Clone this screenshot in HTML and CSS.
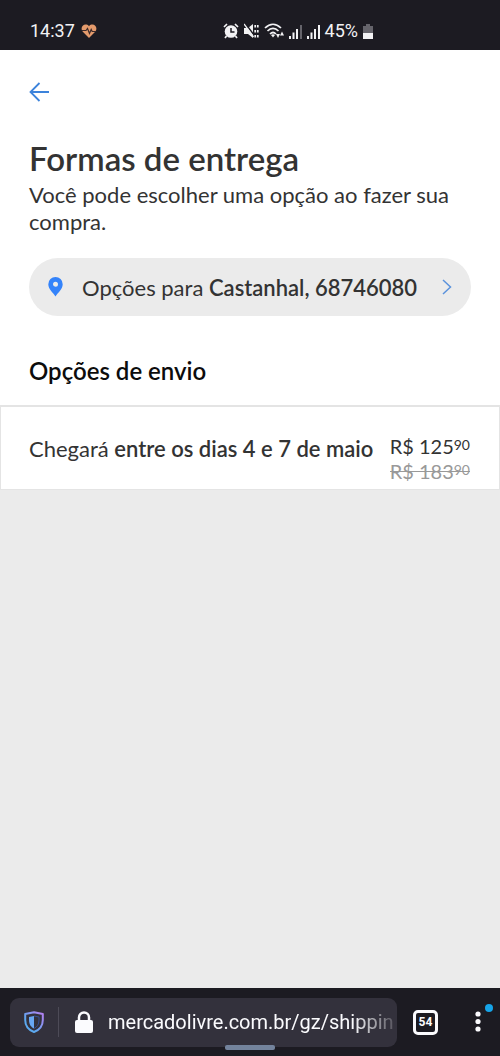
FILE: index.html
```html
<!DOCTYPE html>
<html lang="pt-BR">
<head>
<meta charset="utf-8">
<meta name="viewport" content="width=device-width, initial-scale=1">
<title>Formas de entrega</title>
<link rel="stylesheet" href="styles.css">
</head>
<body>
<header class="status">
  <span class="status-text">14:37</span>
  <svg class="heart" width="16" height="15" viewBox="0 0 16 15" aria-hidden="true"><path d="M8 14 1.800 7.800C-2 3 4-2 8 2.200 12-2 18 3 14.200 7.800Z" fill="#e39a6c"/><path d="M1 6.500h4l1.500-2 2 5 1.700-4 1 2h4" fill="none" stroke="#3b2a2a" stroke-width="1.200"/></svg>
  <div class="status-icons">
    <svg width="16" height="16" viewBox="0 0 16 16" aria-hidden="true"><circle cx="8" cy="8.500" r="6.300" fill="#f2f2f4"/><path d="M1 4 4 1M15 4l-3-3M3.500 13l-1.500 2M12.500 13l1.500 2" stroke="#f2f2f4" stroke-width="1.700"/><path d="M8 5v4h3.500" fill="none" stroke="#1c1b22" stroke-width="1.500"/></svg>
    <svg width="15" height="16" viewBox="0 0 15 16" aria-hidden="true"><path d="M0 5h4l5-4v14l-5-4H0z" fill="#f2f2f4"/><path d="m1 0 9 12" stroke="#1c1b22" stroke-width="1.500"/><path d="m0 1 9.500 13" stroke="#f2f2f4" stroke-width="1.300"/><path d="M11.200 2v2.500M11.200 7v2.500M11.200 12v2.500M13.800 2v2.500M13.800 7v2.500M13.800 12v2.500" stroke="#f2f2f4" stroke-width="1.700"/></svg>
    <svg width="20" height="16" viewBox="0 0 20 16" aria-hidden="true"><path d="M1 5c5-5 11-5 16 0M3.500 8c3.500-3.500 7.500-3.500 11 0M6 11c2-2 4-2 6 0" fill="none" stroke="#f2f2f4" stroke-width="1.700"/><path d="m7 12 2 2.500 2-2.500c-1-1-3-1-4 0" fill="#f2f2f4"/><path d="M12 11h4l-2 4zM16 12.500h4l-2-4z" fill="#f2f2f4"/></svg>
    <svg width="13" height="15" viewBox="0 0 13 15" aria-hidden="true"><path d="M1 15v-3M4.500 15V8.500M8 15V5" stroke="#f2f2f4" stroke-width="2"/><path d="M12 15V1" stroke="#65646b" stroke-width="2"/></svg>
    <svg width="13" height="15" viewBox="0 0 13 15" aria-hidden="true"><path d="M1 15v-3M4.500 15V8.500M8 15V5M12 15V1" stroke="#f2f2f4" stroke-width="2"/></svg>
    <span class="status-text">45%</span>
    <svg width="10" height="15" viewBox="0 0 10 15" aria-hidden="true"><path d="M3 0h4v2h3v7H0V2h3z" fill="#65646b"/><path d="M0 9h10v6H0z" fill="#f2f2f4"/></svg>
  </div>
</header>

<main class="page">
  <section class="intro">
    <button class="back" type="button" aria-label="Voltar"><svg width="20" height="20" viewBox="0 0 20 20" aria-hidden="true"><path d="M20 10H1.500M10.500 1 1.500 10l9 9" fill="none" stroke="#3c83db" stroke-width="1.800"/></svg></button>
    <h1>Formas de entrega</h1>
    <p class="lead">Você pode escolher uma opção ao fazer sua compra.</p>
    <button class="place" type="button">
      <svg width="15" height="20" viewBox="0 0 15 20" aria-hidden="true"><path fill-rule="evenodd" d="M7.500 0A7.200 7.200 0 0 0 .3 7.200C.3 12 5 15.500 7.500 19.500 10 15.500 14.700 12 14.700 7.200A7.200 7.200 0 0 0 7.500 0m0 4.700a2.500 2.500 0 1 1 0 5 2.500 2.500 0 0 1 0-5" fill="#3483fa"/></svg>
      <span class="place-text">Opções para <b>Castanhal, 68746080</b></span>
      <svg width="10" height="16" viewBox="0 0 10 16" aria-hidden="true"><path d="m1 1 7.500 7L1 15" fill="none" stroke="#5a92dc" stroke-width="1.500"/></svg>
    </button>
    <h2>Opções de envio</h2>
  </section>
  <section class="option">
    <p class="when">Chegará <b>entre os dias 4 e 7 de maio</b></p>
    <div class="prices">
      <span class="price">R$ 125<sup>90</sup></span>
      <s class="price old">R$ 183<sup>90</sup></s>
    </div>
  </section>
</main>

<footer class="browser">
  <div class="address">
    <svg width="20" height="22" viewBox="0 0 20 22" aria-hidden="true"><defs><linearGradient id="shield" x1="0" y1="1" x2="1" y2="0"><stop offset="0.300" stop-color="#5ba8ee"/><stop offset="1" stop-color="#b77ff2"/></linearGradient></defs><path d="M10 1.200 18.800 3v6c0 6-3.500 10-8.800 12C4.700 19 1.200 15 1.200 9V3z" fill="none" stroke="url(#shield)" stroke-width="2" stroke-linejoin="round"/><path d="M10 5v12.500C7 16 5 13.500 5 9V6z" fill="#68a7f3"/><path d="M10 5l5 1v3c0 4.500-2 7-5 8.500" fill="none" stroke="#364f91" stroke-width="1"/></svg>
    <span class="rule"></span>
    <svg width="18" height="22" viewBox="0 0 18 22" aria-hidden="true"><rect y="9" width="18" height="13" rx="2" fill="#fbfbfe"/><path d="M4 10V6.500a5 5 0 0 1 10 0V10" fill="none" stroke="#fbfbfe" stroke-width="2.500"/></svg>
    <input class="url" type="text" aria-label="Endereço" value="mercadolivre.com.br/gz/shipping">
  </div>
  <button class="tabs" type="button" aria-label="54 abas">54</button>
  <button class="menu" type="button" aria-label="Menu"><svg width="24" height="32" viewBox="0 0 24 32" aria-hidden="true"><g fill="#fbfbfe"><circle cx="8" cy="12" r="2.600"/><circle cx="8" cy="19.500" r="2.600"/><circle cx="8" cy="27" r="2.600"/></g><circle cx="19" cy="6" r="4" fill="#16a4e8"/></svg></button>
  <span class="handle"></span>
</footer>
</body>
</html>
```
FILE: styles.css
```css
* { box-sizing: border-box; }
body {
  display: flex;
  flex-direction: column;
  min-height: 100vh;
  margin: 0;
  background: #ebebeb;
  color: #333;
  font-family: Lato, "Liberation Sans", sans-serif;
  font-size: 22px;
}
h1, h2, p { margin: 0; }
svg { display: block; flex: none; }
button { padding: 0; border: 0; background: none; color: inherit; font: inherit; }
h1, h2, b { font-weight: 600; }

.status {
  display: flex;
  align-items: center;
  gap: 6px;
  height: 50px;
  padding: 12px 127px 0 30px;
  background: #1c1b22;
}
.status-text { color: #f2f2f4; font: 18px/24px Roboto, sans-serif; }
.status-icons { display: flex; align-items: center; gap: 5px; margin-left: auto; }

.page { flex: 1; }
.intro { padding: 32px 29px 19px; background: #fff; }
.back { display: block; margin-bottom: 36px; }
h1 { font-size: 33px; line-height: 40px; }
.lead { padding-top: 3px; line-height: 27px; }
.place {
  display: flex;
  align-items: center;
  gap: 19px;
  width: 100%;
  height: 58px;
  margin: 23px 0 40px;
  padding: 0 19px;
  border-radius: 29px;
  background: #ebebeb;
}
.place-text { flex: 1; text-align: left; white-space: nowrap; }
h2 { color: #0c0c0c; font-size: 24px; line-height: 30px; }

.option {
  display: flex;
  justify-content: space-between;
  min-height: 85px;
  padding: 27px 29px 4px 28px;
  border: 1px solid #e4e4e4;
  border-top-width: 2px;
  background: #fff;
}
.when { line-height: 30px; white-space: nowrap; }
.prices { display: flex; flex-direction: column; align-items: flex-end; }
.price { font-size: 20px; line-height: 25px; white-space: nowrap; }
.old {
  background: linear-gradient(#999, #999) center / 100% 1px no-repeat;
  color: #999;
  text-decoration: none;
}
sup { font-size: 14px; line-height: 1; vertical-align: 4px; }

.browser {
  position: relative;
  display: flex;
  align-items: center;
  height: 68px;
  padding: 0 6px 0 10px;
  background: #1c1b22;
}
.address {
  display: flex;
  align-items: center;
  flex: 1;
  min-width: 0;
  height: 49px;
  padding: 0 4px 0 14px;
  border-radius: 9px;
  background: #33313c;
}
.rule { width: 1px; height: 30px; margin: 0 16px 0 14px; background: #4d4b57; }
.url {
  flex: 1;
  min-width: 0;
  margin-left: 15px;
  padding: 0;
  border: 0;
  background: none;
  color: #fbfbfe;
  font: 20px/28px Roboto, sans-serif;
  mask-image: linear-gradient(to left, rgb(0 0 0 / 0.2), #000 40px);
}
.tabs {
  width: 25px;
  height: 25px;
  margin: 0 32px 0 16px;
  border: 3px solid #fbfbfe;
  border-radius: 5px;
  color: #fbfbfe;
  font: 700 12px/18px Roboto, sans-serif;
}
.menu { margin-bottom: 8px; }
.handle {
  position: absolute;
  bottom: 6px;
  left: 50%;
  width: 50px;
  height: 5px;
  margin-left: -25px;
  border-radius: 2px;
  background: #73839c;
}
```
